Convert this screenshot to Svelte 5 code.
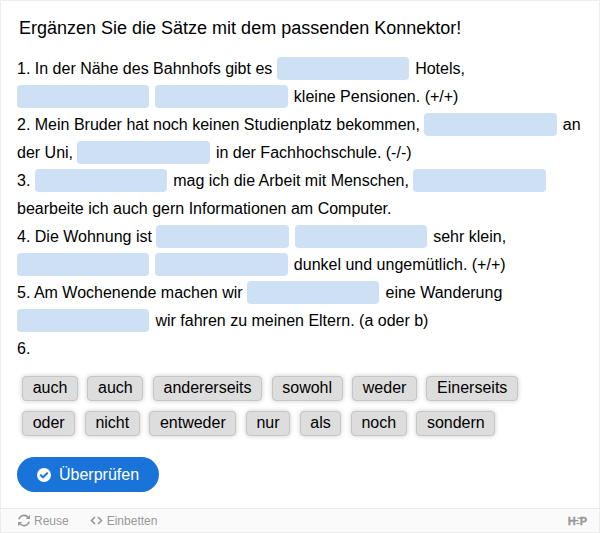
<script lang="ts">
  // null marks a drop zone
  const lines: (string | null)[][] = [
    ["1. In der Nähe des Bahnhofs gibt es ", null, " Hotels,"],
    [null, " ", null, " kleine Pensionen. (+/+)"],
    ["2. Mein Bruder hat noch keinen Studienplatz bekommen, ", null, " an"],
    ["der Uni, ", null, " in der Fachhochschule. (-/-)"],
    ["3. ", null, " mag ich die Arbeit mit Menschen, ", null],
    ["bearbeite ich auch gern Informationen am Computer."],
    ["4. Die Wohnung ist ", null, " ", null, " sehr klein,"],
    [null, " ", null, " dunkel und ungemütlich. (+/+)"],
    ["5. Am Wochenende machen wir ", null, " eine Wanderung"],
    [null, " wir fahren zu meinen Eltern. (a oder b)"],
    ["6."],
  ];

  const words = [
    ["auch", "auch", "andererseits", "sowohl", "weder", "Einerseits"],
    ["oder", "nicht", "entweder", "nur", "als", "noch", "sondern"],
  ];
</script>

<div class="frame">
  <main>
    <p class="intro">Ergänzen Sie die Sätze mit dem passenden Konnektor!</p>

    <div class="task">
      {#each lines as line}
        <div class="line">
          {#each line as part}
            {#if part === null}<span class="drop"></span>{:else}<span class="text">{part}</span>{/if}
          {/each}
        </div>
      {/each}
    </div>

    <div class="words">
      {#each words as row}
        <div class="word-row">
          {#each row as word}
            <span class="word">{word}</span>
          {/each}
        </div>
      {/each}
    </div>

    <button class="check">
      <svg width="14" height="14" viewBox="0 0 14 14">
        <circle cx="7" cy="7" r="7" fill="#fff" />
        <path d="M3.2 6.600 6 9.300 10.800 4.600" fill="none" stroke="#1a73d9" stroke-width="2" />
      </svg>
      <span>Überprüfen</span>
    </button>
  </main>

  <footer>
    <button class="action reuse">
      <svg width="14" height="13" viewBox="0 0 14 13">
        <path d="M2 5.300A5.200 5.200 0 0 1 11 3.200M12 7.700A5.200 5.200 0 0 1 3 9.800" fill="none" stroke="currentColor" stroke-width="1.600" />
        <path d="M13 .8V5H8.800zM1 12.200V8h4.200z" fill="currentColor" />
      </svg>
      <span>Reuse</span>
    </button>
    <button class="action">
      <svg width="13" height="9" viewBox="0 0 13 9">
        <path d="M5 1 1.500 4.500 5 8M8 1l3.500 3.500L8 8" fill="none" stroke="currentColor" stroke-width="1.700" />
      </svg>
      <span>Einbetten</span>
    </button>
    <div class="logo">
      <span>H</span>
      <svg width="6" height="9" viewBox="0 0 6 9">
        <path d="M0 4.700H3.500M2.500 2.200H6" stroke="currentColor" stroke-width="1.300" />
        <path d="M1.500 7.500H4.500" stroke="currentColor" stroke-width="1.300" />
      </svg>
      <span>P</span>
    </div>
  </footer>
</div>

<style>
  :global(body) {
    background: #fff;
  }

  .frame {
    box-sizing: border-box;
    display: flex;
    flex-direction: column;
    height: 533px;
    border: 1px solid #ececec;
    color: #000;
    font-family: "Liberation Sans", Arial, sans-serif;
    font-size: 16px;
    overflow: hidden;
  }

  main {
    flex: 1;
    padding: 0 16px;
  }

  .intro {
    margin: 15px 0 14px 2px;
    font-size: 18px;
    line-height: 24px;
  }

  .line {
    display: flex;
    align-items: center;
    height: 28px;
    white-space: pre;
  }

  .text {
    padding-top: 2px;
  }

  .drop {
    width: 132.300px;
    height: 23px;
    margin-right: 1.700px;
    border-radius: 4px;
    background: #cee0f4;
  }

  .words {
    display: flex;
    flex-direction: column;
    gap: 10px;
    margin: 14px 0 0 5px;
  }

  .word-row {
    display: flex;
    gap: 9.450px;
  }

  .word {
    box-sizing: border-box;
    height: 25px;
    padding: 0 9.650px;
    border: 1px solid #c6c6c6;
    border-radius: 4px;
    background: #ddd;
    box-shadow: 0 0 5px rgba(0, 0, 0, 0.2);
    line-height: 22px;
  }

  button {
    display: flex;
    align-items: center;
    border: 0;
    font: inherit;
  }

  .check {
    gap: 8px;
    height: 35px;
    margin-top: 21px;
    padding: 0 20px;
    border-radius: 18px;
    background: #1a73d9;
    color: #fff;
  }

  footer {
    display: flex;
    align-items: center;
    height: 23px;
    padding: 0 12px 0 16px;
    border-top: 1px solid #ebebeb;
    background: #fafafa;
    color: #999;
    font-size: 12px;
  }

  .action {
    gap: 4px;
    padding: 0;
    background: none;
    color: inherit;
  }

  .reuse {
    gap: 3px;
    margin-right: 21px;
  }

  .logo {
    display: flex;
    align-items: center;
    margin-left: auto;
    font-size: 11px;
    font-weight: bold;
    -webkit-text-stroke: 0.300px #999;
  }

  .logo svg {
    margin: 0 -1px;
  }
</style>
